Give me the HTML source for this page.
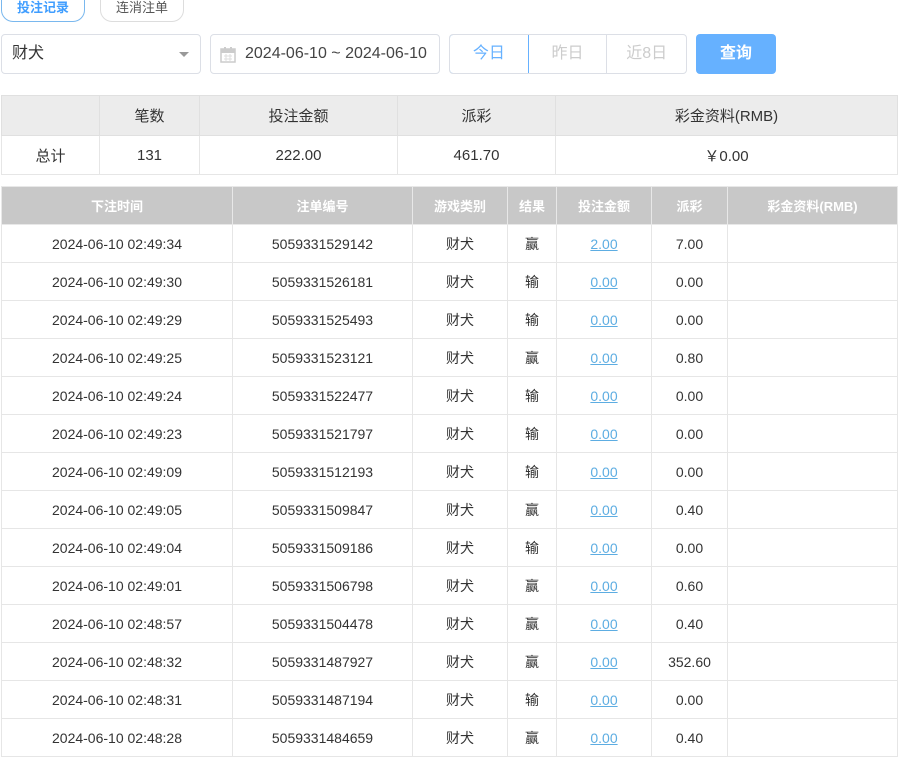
<!DOCTYPE html>
<html><head><meta charset="utf-8"><style>
*{box-sizing:border-box;margin:0;padding:0}
body{width:904px;height:759px;overflow:hidden;background:#fff;font-family:"Liberation Sans","Noto Sans CJK SC",sans-serif;color:#333;position:relative}
.abs{position:absolute}
.tab{top:-8px;height:30px;border:1px solid #ddd;border-radius:0 0 12px 12px;font-size:13px;line-height:26px;text-align:center;padding-top:2px}
.inp{top:34px;height:40px;border:1px solid #dcdfe6;border-radius:4px;font-size:16px;line-height:38px}
table{border-collapse:collapse;position:absolute;left:1px;table-layout:fixed}
td,th{text-align:center;border:1px solid #e6e6e6}
.sum th{background:#ececec;font-weight:normal;height:40px;font-size:15px;border-color:#e0e0e0}
.sum td{height:39px;font-size:15px}
.main th{background:#c8c8c8;color:#fff;font-weight:bold;height:38px;font-size:13px;border:1px solid #e8e8e8}
.main td{height:38px;font-size:14px;color:#333}
.main a{color:#5dade2;text-decoration:underline}
</style></head><body>
<div class="abs tab" style="left:1px;width:84px;border-color:#7ab8ee;color:#409eff;font-weight:bold">投注记录</div>
<div class="abs tab" style="left:100px;width:84px;color:#555">连消注单</div>
<div class="abs inp" style="left:1px;width:200px;padding-left:10px">财犬<span class="abs" style="right:11px;top:17px;width:0;height:0;border-left:5px solid transparent;border-right:5px solid transparent;border-top:5px solid #999"></span></div>
<div class="abs inp" style="left:210px;width:230px;padding-left:34px;color:#444">
<svg class="abs" style="left:9px;top:11px" width="16" height="17" viewBox="0 0 16 17"><rect x="1" y="3" width="14" height="13" fill="none" stroke="#ccc" stroke-width="1.5"/><rect x="1" y="3" width="14" height="4" fill="#ccc"/><rect x="4" y="1" width="2" height="4" fill="#ccc"/><rect x="10" y="1" width="2" height="4" fill="#ccc"/><path d="M4 10h8M4 13h8M6 8v7M10 8v7" stroke="#ddd"/></svg>2024-06-10 ~ 2024-06-10</div>
<div class="abs inp" style="left:449px;width:238px;display:flex;padding:0;overflow:hidden">
<div style="width:80px;border:1px solid #66b1ff;border-radius:4px 0 0 4px;color:#66b1ff;text-align:center;margin:-1px 0 -1px -1px;line-height:38px">今日</div>
<div style="width:79px;border-right:1px solid #dcdfe6;color:#ccc;text-align:center">昨日</div>
<div style="width:79px;color:#ccc;text-align:center">近8日</div></div>
<div class="abs" style="left:696px;top:34px;width:80px;height:40px;background:#66b1ff;border-radius:4px;color:#fff;text-align:center;line-height:40px;font-size:16px;font-weight:bold">查询</div>
<table class="sum" style="top:95px;width:896px">
<colgroup><col style="width:98px"><col style="width:100px"><col style="width:198px"><col style="width:158px"><col style="width:342px"></colgroup>
<tr><th></th><th>笔数</th><th>投注金额</th><th>派彩</th><th>彩金资料(RMB)</th></tr>
<tr><td>总计</td><td>131</td><td>222.00</td><td>461.70</td><td>￥0.00</td></tr></table>
<table class="main" style="top:186px;width:896px">
<colgroup><col style="width:231px"><col style="width:180px"><col style="width:95px"><col style="width:49px"><col style="width:95px"><col style="width:76px"><col style="width:170px"></colgroup>
<tr><th>下注时间</th><th>注单编号</th><th>游戏类别</th><th>结果</th><th>投注金额</th><th>派彩</th><th>彩金资料(RMB)</th></tr>
<tr><td>2024-06-10 02:49:34</td><td>5059331529142</td><td>财犬</td><td>赢</td><td><a>2.00</a></td><td>7.00</td><td></td></tr>
<tr><td>2024-06-10 02:49:30</td><td>5059331526181</td><td>财犬</td><td>输</td><td><a>0.00</a></td><td>0.00</td><td></td></tr>
<tr><td>2024-06-10 02:49:29</td><td>5059331525493</td><td>财犬</td><td>输</td><td><a>0.00</a></td><td>0.00</td><td></td></tr>
<tr><td>2024-06-10 02:49:25</td><td>5059331523121</td><td>财犬</td><td>赢</td><td><a>0.00</a></td><td>0.80</td><td></td></tr>
<tr><td>2024-06-10 02:49:24</td><td>5059331522477</td><td>财犬</td><td>输</td><td><a>0.00</a></td><td>0.00</td><td></td></tr>
<tr><td>2024-06-10 02:49:23</td><td>5059331521797</td><td>财犬</td><td>输</td><td><a>0.00</a></td><td>0.00</td><td></td></tr>
<tr><td>2024-06-10 02:49:09</td><td>5059331512193</td><td>财犬</td><td>输</td><td><a>0.00</a></td><td>0.00</td><td></td></tr>
<tr><td>2024-06-10 02:49:05</td><td>5059331509847</td><td>财犬</td><td>赢</td><td><a>0.00</a></td><td>0.40</td><td></td></tr>
<tr><td>2024-06-10 02:49:04</td><td>5059331509186</td><td>财犬</td><td>输</td><td><a>0.00</a></td><td>0.00</td><td></td></tr>
<tr><td>2024-06-10 02:49:01</td><td>5059331506798</td><td>财犬</td><td>赢</td><td><a>0.00</a></td><td>0.60</td><td></td></tr>
<tr><td>2024-06-10 02:48:57</td><td>5059331504478</td><td>财犬</td><td>赢</td><td><a>0.00</a></td><td>0.40</td><td></td></tr>
<tr><td>2024-06-10 02:48:32</td><td>5059331487927</td><td>财犬</td><td>赢</td><td><a>0.00</a></td><td>352.60</td><td></td></tr>
<tr><td>2024-06-10 02:48:31</td><td>5059331487194</td><td>财犬</td><td>输</td><td><a>0.00</a></td><td>0.00</td><td></td></tr>
<tr><td>2024-06-10 02:48:28</td><td>5059331484659</td><td>财犬</td><td>赢</td><td><a>0.00</a></td><td>0.40</td><td></td></tr>
</table>
</body></html>
